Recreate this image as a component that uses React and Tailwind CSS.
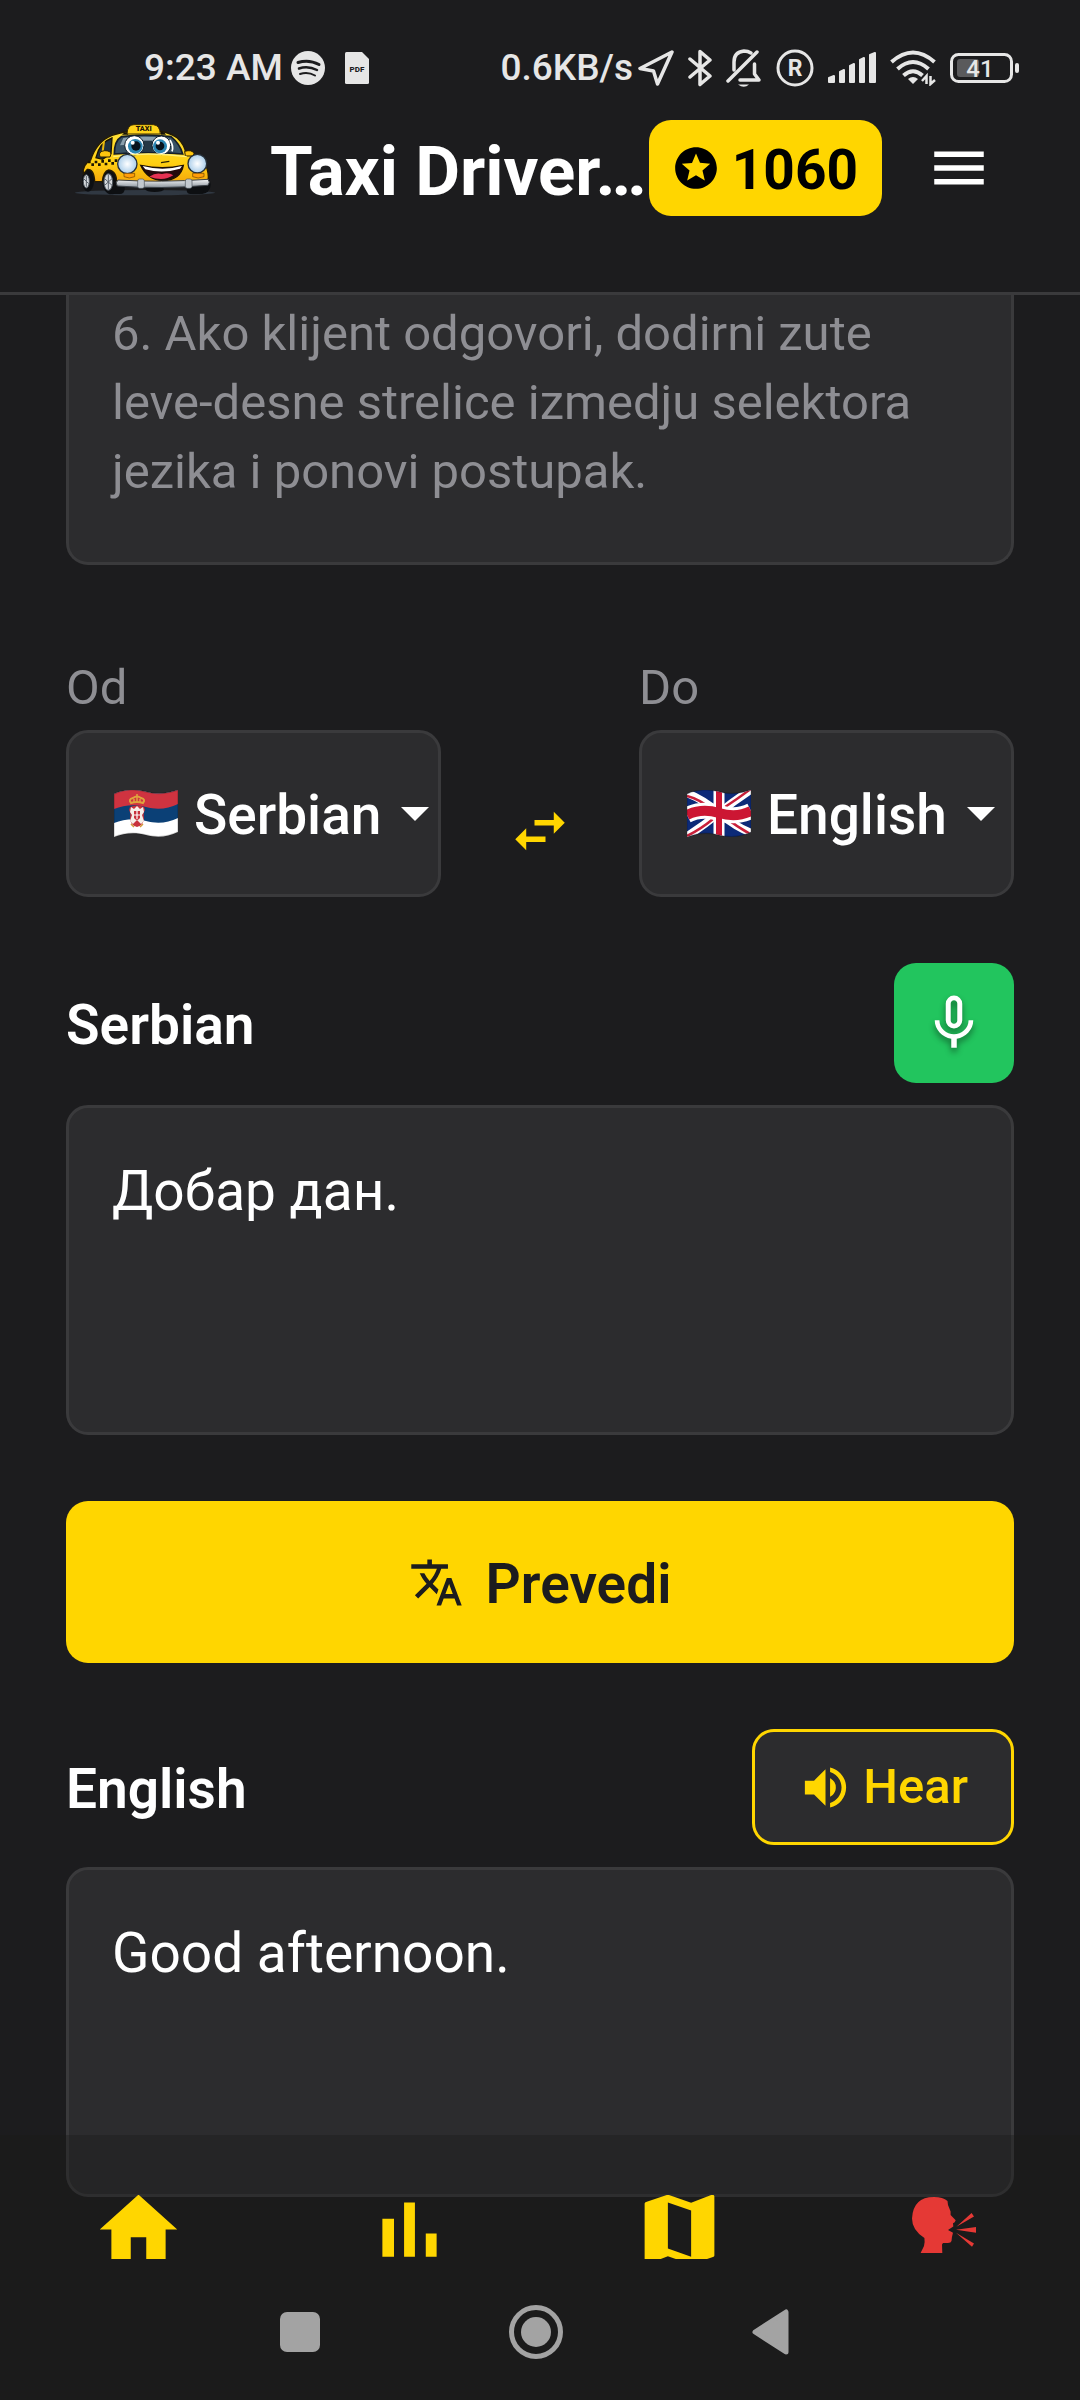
import { MdStars, MdMenu, MdSwapHoriz, MdTranslate, MdVolumeUp, MdHome, MdMap } from "react-icons/md";

function TaxiLogo() {
  return (
    <svg viewBox="36 42 438 219" className="h-[73px] w-[146px] shrink-0" role="img" aria-label="Taxi Driver">
      <defs>
        <linearGradient id="body" x1="0" y1="0" x2="0" y2="1">
          <stop offset="0" stopColor="#ffe23a" />
          <stop offset="0.6" stopColor="#ffd012" />
          <stop offset="1" stopColor="#f5a30a" />
        </linearGradient>
        <linearGradient id="chrome" x1="0" y1="0" x2="0" y2="1">
          <stop offset="0" stopColor="#f4f6f8" />
          <stop offset="1" stopColor="#8d959d" />
        </linearGradient>
        <radialGradient id="lamp">
          <stop offset="0" stopColor="#ffffff" />
          <stop offset="1" stopColor="#a9cdea" />
        </radialGradient>
      </defs>
      <ellipse cx="255" cy="248" rx="210" ry="8" fill="#303842" />
      <g fill="#0d0f12">
        <ellipse cx="84" cy="212" rx="18" ry="33" />
        <ellipse cx="154" cy="216" rx="27" ry="37" />
        <ellipse cx="426" cy="224" rx="26" ry="28" />
        <rect x="380" y="218" width="50" height="34" rx="12" />
        <rect x="150" y="212" width="44" height="40" rx="14" />
        <ellipse cx="284" cy="238" rx="28" ry="8" />
      </g>
      <path d="M70 192 Q66 166 92 150 Q110 94 156 76 Q205 60 260 60 Q325 62 352 84 Q376 106 378 134 Q432 140 441 176 Q450 206 440 224 H170 Q172 184 146 180 Q130 184 127 215 H104 Q102 176 82 178 Z" fill="url(#body)" stroke="#241b04" strokeWidth="4" />
      <path d="M108 143 Q118 98 156 84 L153 130 L128 148 Z" fill="#1e3140" stroke="#1b1503" strokeWidth="4" />
      <path d="M132 94 L126 140" stroke="#e8b90b" strokeWidth="6" />
      <path d="M163 132 Q163 92 184 80 Q255 70 333 80 Q360 102 368 132 Q265 124 163 132 Z" fill="#395264" stroke="#151f29" strokeWidth="5" />
      <path d="M190 84 Q250 76 325 84 L340 108 Q260 96 180 106 Z" fill="#8ba0ae" />
      <rect x="248" y="92" width="30" height="34" fill="#253845" />
      <path d="M186 74 Q192 64 206 66 L204 74 Z M318 74 Q312 62 302 66 L302 74 Z" fill="#16130a" />
      <path d="M201 72 Q202 44 222 44 H280 Q300 46 301 72 Z" fill="#ffd31a" stroke="#3a2c03" strokeWidth="3" />
      <text x="227" y="64" fontFamily="Roboto, sans-serif" fontWeight="900" fontSize="22" fill="#1a1405">TAXI</text>
      <circle cx="223" cy="106" r="29" fill="#ffffff" stroke="#10202c" strokeWidth="3" />
      <circle cx="226" cy="109" r="22" fill="#2c86b3" />
      <circle cx="228" cy="108" r="14" fill="#07121c" />
      <circle cx="218" cy="98" r="6" fill="#ffffff" />
      <circle cx="304" cy="106" r="28" fill="#ffffff" stroke="#10202c" strokeWidth="3" />
      <circle cx="300" cy="109" r="21" fill="#2c86b3" />
      <circle cx="300" cy="108" r="13" fill="#07121c" />
      <circle cx="294" cy="98" r="6" fill="#ffffff" />
      <path d="M330 90 Q342 110 336 124" stroke="#ffffff" strokeWidth="5" fill="none" />
      <path d="M118 132 Q120 122 134 122 Q152 122 153 132 L150 141 H120 Z" fill="#ffc60f" stroke="#2c2003" strokeWidth="3" />
      <path d="M374 124 Q396 118 402 130 L400 138 H376 Z" fill="#ffc60f" stroke="#2c2003" strokeWidth="3" />
      <path d="M160 140 Q260 124 380 140" stroke="#fff07a" strokeWidth="4" fill="none" />
      <path d="M303 158 L328 154" stroke="#2a2104" strokeWidth="4" />
      <g fill="#1b1503">
        <path d="M84 152h8v8h-8z M94 160h8v8h-8z M104 152h8v8h-8z M114 160h8v8h-8z M124 150h8v8h-8z M134 158h8v8h-8z M144 148h8v8h-8z M154 156h8v8h-8z M164 148h8v8h-8z" />
      </g>
      <circle cx="202" cy="162" r="29" fill="url(#lamp)" stroke="#26303a" strokeWidth="4" />
      <circle cx="412" cy="161" r="28" fill="url(#lamp)" stroke="#26303a" strokeWidth="4" />
      <path d="M242 166 Q308 180 370 166 Q362 210 308 212 Q262 210 242 166 Z" fill="#240a0c" stroke="#1b1003" strokeWidth="4" />
      <path d="M248 168 Q308 184 366 168 L360 176 Q308 192 256 178 Z" fill="#ffffff" />
      <path d="M268 200 Q288 186 306 192 Q326 186 340 196 Q310 216 268 200 Z" fill="#e63253" />
      <path d="M192 190h32v10q-16 8-32 0z M398 190h34v10q-18 8-34 0z" fill="#ff9d0a" stroke="#6b4300" strokeWidth="2" />
      <path d="M174 210 Q300 218 444 208 Q452 216 444 226 Q300 238 172 228 Q164 218 174 210 Z" fill="url(#chrome)" stroke="#3b4148" strokeWidth="3" />
      <rect x="233" y="207" width="20" height="28" rx="6" fill="#c3c9cf" stroke="#4c535a" strokeWidth="2" />
      <rect x="376" y="207" width="20" height="28" rx="6" fill="#c3c9cf" stroke="#4c535a" strokeWidth="2" />
      <ellipse cx="79" cy="214" rx="9" ry="20" fill="#d6dade" stroke="#4b525a" strokeWidth="3" />
      <ellipse cx="145" cy="216" rx="13" ry="25" fill="#d6dade" stroke="#4b525a" strokeWidth="3" />
      <path d="M145 193v46M134 206l22 20M156 206l-22 20M79 198v32M72 207l14 14" stroke="#59616a" strokeWidth="3" />
    </svg>
  );
}

const FLAG_SHAPE = "M0 4 C10 -1 22 -1 33 2 C45 5 55 3 64 0 V42 C54 47 43 48 32 45 C21 42 10 43 0 47 Z";

function SerbianFlag() {
  return (
    <svg viewBox="0 0 64 47" className="h-[47px] w-16 shrink-0" aria-hidden="true">
      <clipPath id="flag-rs"><path d={FLAG_SHAPE} /></clipPath>
      <g clipPath="url(#flag-rs)">
        <rect width="64" height="47" fill="#ffffff" />
        <path d="M0 -2 H64 V28 C54 33 43 34 32 31 C21 28 10 29 0 33 Z" fill="#0b4076" />
        <path d="M0 -2 H64 V14 C54 19 43 20 32 17 C21 14 10 15 0 19 Z" fill="#cf3340" />
        <path d="M16 17 q7 -3 14 0 l1 3 q-2 3 -1 8 q0 7 -7 9 q-7 -2 -7 -9 q1 -5 -1 -8 z" fill="#c8313b" />
        <path d="M17 17 l3 2 l3 -3 l3 3 l3 -2 l1 5 l-2 3 l2 6 l-3 3 l-4 -4 l-4 4 l-3 -3 l2 -6 l-2 -3 z" fill="#f6efe9" />
        <path d="M20 21h6v7q-3 4-6 0z" fill="#c8313b" />
        <path d="M23 21v8M20 25h6" stroke="#fff" strokeWidth="1.2" />
        <path d="M17 13 q-3 -4 2 -5 q4 -3 8 0 q5 1 2 5 q-6 -2 -12 0z" fill="none" stroke="#e0a33e" strokeWidth="2" />
        <path d="M23 4v9M20 9v3M26 9v3" stroke="#e0a33e" strokeWidth="1.5" />
        <path d="M17 34 l3 3 M29 34 l-3 3" stroke="#d39a3a" strokeWidth="1.5" />
      </g>
      <path d={FLAG_SHAPE} fill="none" stroke="#00000030" strokeWidth="1.5" />
    </svg>
  );
}

function BritishFlag() {
  return (
    <svg viewBox="0 0 64 47" className="h-[47px] w-16 shrink-0" aria-hidden="true">
      <clipPath id="flag-gb"><path d={FLAG_SHAPE} /></clipPath>
      <g clipPath="url(#flag-gb)">
        <rect width="64" height="47" fill="#0c2a78" />
        <path d="M-1 3 Q14 8 32 23 T65 43" stroke="#fff" strokeWidth="8" fill="none" />
        <path d="M-1 47 Q16 36 32 23 T65 -1" stroke="#fff" strokeWidth="8" fill="none" />
        <path d="M0 6 Q12 9 26 20 M38 27 Q50 37 65 45" stroke="#c8203a" strokeWidth="2.5" fill="none" />
        <path d="M0 46 Q14 39 26 29 M38 17 Q52 8 65 -2" stroke="#c8203a" strokeWidth="2.5" fill="none" />
        <path d="M0 25 C10 20 22 20 32 23 S54 26 64 21" stroke="#fff" strokeWidth="16" fill="none" />
        <path d="M32 0V47" stroke="#fff" strokeWidth="11" />
        <path d="M0 25 C10 20 22 20 32 23 S54 26 64 21" stroke="#cc1633" strokeWidth="10" fill="none" />
        <path d="M32 0V47" stroke="#cc1633" strokeWidth="6" />
      </g>
      <path d={FLAG_SHAPE} fill="none" stroke="#00000030" strokeWidth="1.5" />
    </svg>
  );
}

function StatusBar() {
  return (
    <div className="flex h-10 items-center justify-between pl-[144px] pr-[60px] text-[37px] leading-10 font-medium text-[#e6e6e6]">
      <div className="flex items-center">
        <span className="mr-2">9:23 AM</span>
        <svg viewBox="0 0 34 34" className="mr-5 h-[34px] w-[34px]" aria-hidden="true">
          <circle cx="17" cy="17" r="17" fill="#e6e6e6" />
          <g stroke="#1c1c1e" fill="none" strokeLinecap="round">
            <path d="M7 11.5 Q18 8 28 13.5" strokeWidth="3" />
            <path d="M8 17.5 Q17 14.5 26 19" strokeWidth="2.5" />
            <path d="M9 23 Q17 20.5 24 24.500" strokeWidth="2" />
          </g>
        </svg>
        <svg viewBox="0 0 24 32" className="h-8 w-6" aria-hidden="true">
          <path d="M1.5 0H17L24 7V30.5Q24 32 22.5 32H1.5Q0 32 0 30.500V1.500Q0 0 1.500 0Z" fill="#e6e6e6" />
          <text x="12" y="20" textAnchor="middle" fontSize="8" fontWeight="800" fill="#1c1c1e">PDF</text>
        </svg>
      </div>
      <div className="flex items-center gap-[14px]">
        <div className="flex items-center gap-[5px]">
          <span>0.6KB/s</span>
          <svg viewBox="0 0 36 36" className="h-9 w-9" fill="none" stroke="#e6e6e6" strokeWidth="3.5" strokeLinejoin="round" aria-hidden="true">
            <path d="M34 2L2 18.5L15.5 21L19.5 34Z" />
          </svg>
        </div>
        <svg viewBox="0 0 24 38" className="h-[38px] w-6" fill="none" stroke="#e6e6e6" strokeWidth="3.5" strokeLinejoin="round" strokeLinecap="round" aria-hidden="true">
          <path d="M2 10L22 27L12 35.5V2.5L22 11L2 28" />
        </svg>
        <svg viewBox="0 0 36 38" className="h-[38px] w-9" fill="none" stroke="#e6e6e6" strokeWidth="3.5" strokeLinecap="round" strokeLinejoin="round" aria-hidden="true">
          <path d="M25 4Q22 2 18 2Q8 3 8 13V21" />
          <path d="M14 31H33L28.5 25V15" />
          <path d="M2 32L31 3" />
          <path d="M12 35.5Q18 40 23 35.5Z" fill="#e6e6e6" stroke="none" />
        </svg>
        <svg viewBox="0 0 38 38" className="h-[38px] w-[38px]" fill="none" stroke="#e6e6e6" strokeWidth="3" aria-hidden="true">
          <circle cx="19" cy="19" r="17" />
          <text x="19" y="27" textAnchor="middle" fontSize="23" fontWeight="700" fill="#e6e6e6" stroke="none">R</text>
        </svg>
        <svg viewBox="0 0 48 32" className="h-8 w-12" fill="#e6e6e6" stroke="#e6e6e6" strokeWidth="2" strokeLinejoin="round" aria-hidden="true">
          <path d="M1 26L6 24V30H1Z M12 20L16 18V30H12Z M22 14L26 12V30H22Z M32 8L36 6V30H32Z M42 3L47 1V30H42Z" />
        </svg>
        <svg viewBox="0 0 46 36" className="h-9 w-[46px]" fill="none" stroke="#e6e6e6" strokeWidth="4" aria-hidden="true">
          <path d="M1.5 12Q23 -7 44.5 12" />
          <path d="M7.5 19Q23 5 38.5 19" />
          <path d="M13.5 25.5Q23 17 32.500 25.500" />
          <path d="M23 34L18 29Q23 25 28 29Z" fill="#e6e6e6" stroke="none" />
          <path d="M36.5 34V26L32 31M40.500 26V34L45 30" strokeWidth="2.5" />
        </svg>
        <svg viewBox="0 0 70 30" className="h-[30px] w-[70px]" aria-hidden="true">
          <rect x="1.5" y="1.5" width="60" height="27" rx="7" fill="none" stroke="#e6e6e6" strokeWidth="3" />
          <rect x="7" y="6" width="22" height="18" rx="3" fill="#5a5a5c" />
          <rect x="65" y="10" width="4" height="10" rx="2" fill="#e6e6e6" />
          <text x="30" y="24" textAnchor="middle" fontSize="24" fontWeight="500" fill="#e6e6e6">41</text>
        </svg>
      </div>
    </div>
  );
}

function Header() {
  return (
    <header className="border-b-[3px] border-[#3a3a3c] pt-12">
      <StatusBar />
      <div className="flex items-start pt-8 pr-[88px] pb-[76px] pl-[72px]">
        <div className="pt-1">
          <TaxiLogo />
        </div>
        <h1 className="ml-[52px] min-w-0 flex-1 truncate pt-[10px] text-[69px] leading-[84px] font-bold">Taxi Driver…</h1>
        <div className="flex h-24 shrink-0 items-center gap-[11px] rounded-[22px] bg-[#ffd600] pr-6 pl-[22px] text-black">
          <MdStars className="h-[50px] w-[50px]" aria-hidden="true" />
          <span className="pt-1 text-[55px] leading-[66px] font-bold">1060</span>
        </div>
        <button type="button" aria-label="Menu" className="ml-11 flex h-24 shrink-0 items-center">
          <MdMenu className="h-[66px] w-[66px]" />
        </button>
      </div>
    </header>
  );
}

function LanguageField({ id, label, flag, value }) {
  return (
    <div className="min-w-0 flex-1">
      <label htmlFor={id} className="mb-[14px] block text-[49px] leading-[56px] text-[#8e8e93]">{label}</label>
      <div className="flex h-[167px] items-center rounded-[22px] border-[3px] border-[#3a3a3c] bg-[#2c2c2e] pl-[45px]">
        {flag}
        <select id={id} defaultValue={value} className="ml-4 field-sizing-content appearance-none bg-transparent pt-[2px] text-[55px] leading-[66px] font-medium text-white outline-none">
          <option>Serbian</option>
          <option>English</option>
        </select>
        <svg viewBox="0 0 28 14" className="ml-5 h-[14px] w-7 shrink-0" aria-hidden="true">
          <path d="M0 0H28L14 14Z" fill="#ffffff" />
        </svg>
      </div>
    </div>
  );
}

const BOX = "block h-[330px] w-full resize-none rounded-[22px] border-[3px] border-[#3a3a3c] bg-[#2c2c2e] px-[43px] pt-[46px] text-[55px] leading-[75px] text-white outline-none";

function BottomBar() {
  return (
    <footer className="fixed inset-x-0 bottom-0 bg-[#1a1a18]/35 pt-[60px]">
      <nav className="flex h-16 items-start justify-between overflow-hidden pr-24 pl-[92px] text-[#ffd600]">
        <a href="#home" aria-label="Home">
          <MdHome className="-mt-3 h-[93px] w-[93px]" />
        </a>
        <a href="#stats" aria-label="Statistics">
          <svg viewBox="0 0 24 24" className="-mt-3 h-[93px] w-[93px]" fill="currentColor" aria-hidden="true">
            <path d="M5 9.2h3V19H5zM10.6 5h2.8v14h-2.8zM16.2 13H19v6h-2.8z" />
          </svg>
        </a>
        <a href="#map" aria-label="Map">
          <MdMap className="-mt-3 h-[93px] w-[93px]" />
        </a>
        <a href="#translate" aria-label="Translator" className="px-2 pt-[2px]">
          <svg viewBox="0 0 64 56" className="h-14 w-16" fill="#e53935" aria-hidden="true">
            <path d="M22 0Q31 0 35.5 4L36 8L38.6 14.5V18L43.7 23.3L42.7 25.3L41 26.3L41.3 29.5L36 33L41 35.7L40 39.7L39.5 44Q39 46 36 46H31L30 47.5L30.3 56H8.6L12 49Q13 44 12.4 41Q0 33 0 21.5Q1 0 22 0Z" />
            <path d="M44.4 29.7L59.6 16L62 19.5Z M44 32.8L64 30V35.7Z M44 35.7L62 46.5L60 49.7Z" />
          </svg>
        </a>
      </nav>
      <div className="flex items-center justify-center pt-[46px] pr-3 pb-[41px]">
        <button type="button" aria-label="Recent apps" className="h-10 w-10 rounded-[7px] bg-[#a3a3a3]" />
        <button type="button" aria-label="Home screen" className="mx-[189px] flex h-[54px] w-[54px] items-center justify-center rounded-full border-[5px] border-[#a3a3a3]">
          <span className="h-[30px] w-[30px] rounded-full bg-[#a3a3a3]" />
        </button>
        <button type="button" aria-label="Back">
          <svg viewBox="0 0 37 46" className="h-[46px] w-[37px]" aria-hidden="true">
            <path d="M3 23L34 3V43Z" fill="#a3a3a3" stroke="#a3a3a3" strokeWidth="5" strokeLinejoin="round" />
          </svg>
        </button>
      </div>
    </footer>
  );
}

export default function App() {
  return (
    <div className="min-h-screen bg-[#1c1c1e] font-[Roboto,'Noto_Sans',sans-serif] text-white">
      <Header />
      <main className="px-[66px] pb-[202px]">
        <p className="rounded-b-[22px] border-[3px] border-t-0 border-[#3a3a3c] bg-[#2c2c2e] px-[43px] pt-1 pb-14 text-[49px] leading-[69px] text-[#8e8e93]">
          6. Ako klijent odgovori, dodirni zute leve-desne strelice izmedju selektora jezika i ponovi postupak.
        </p>

        <div className="mt-[95px] flex items-end">
          <LanguageField id="from" label="Od" flag={<SerbianFlag />} value="Serbian" />
          <button type="button" aria-label="Swap languages" className="mx-[66px] mb-[33px] shrink-0 text-[#ffd600]">
            <MdSwapHoriz className="h-[66px] w-[66px]" />
          </button>
          <LanguageField id="to" label="Do" flag={<BritishFlag />} value="English" />
        </div>

        <div className="mt-[66px] mb-[22px] flex items-center justify-between">
          <label htmlFor="source" className="pt-1 text-[55px] leading-[66px] font-semibold">Serbian</label>
          <button type="button" aria-label="Speak" className="flex h-[120px] w-[120px] items-center justify-center rounded-[22px] bg-[#22c55e]">
            <svg viewBox="0 0 24 24" className="h-[66px] w-[66px] drop-shadow-[0_4px_3px_rgba(0,0,0,0.45)]" fill="#ffffff" aria-hidden="true">
              <path d="M17.3,11C17.3,14 14.76,16.1 12,16.1C9.24,16.1 6.7,14 6.7,11H5C5,14.41 7.72,17.23 11,17.72V21H13V17.72C16.28,17.23 19,14.41 19,11M10.8,4.9C10.8,4.24 11.34,3.7 12,3.7C12.66,3.7 13.2,4.24 13.2,4.9L13.19,11.1C13.19,11.76 12.66,12.3 12,12.3C11.34,12.3 10.8,11.76 10.8,11.1M12,14A3,3 0 0,0 15,11V5A3,3 0 0,0 12,2A3,3 0 0,0 9,5V11A3,3 0 0,0 12,14Z" />
            </svg>
          </button>
        </div>
        <textarea id="source" className={BOX} defaultValue="Добар дан." />

        <button type="button" className="mt-[66px] flex h-[162px] w-full items-center justify-center gap-[22px] rounded-[22px] bg-[#ffd600] text-[#1c1c1e]">
          <MdTranslate className="h-[55px] w-[55px]" aria-hidden="true" />
          <span className="pt-1 text-[55px] leading-[66px] font-semibold">Prevedi</span>
        </button>

        <div className="mt-[66px] mb-[22px] flex items-center justify-between">
          <label htmlFor="result" className="pt-1 text-[55px] leading-[66px] font-semibold">English</label>
          <button type="button" className="flex h-[116px] items-center gap-[10px] rounded-[22px] border-[3px] border-[#ffd600] bg-[#2c2c2e] px-[43px] text-[49px] leading-[60px] font-medium text-[#ffd600]">
            <MdVolumeUp className="h-[55px] w-[55px]" aria-hidden="true" />
            Hear
          </button>
        </div>
        <textarea id="result" readOnly className={BOX} defaultValue="Good afternoon." />
      </main>
      <BottomBar />
    </div>
  );
}
